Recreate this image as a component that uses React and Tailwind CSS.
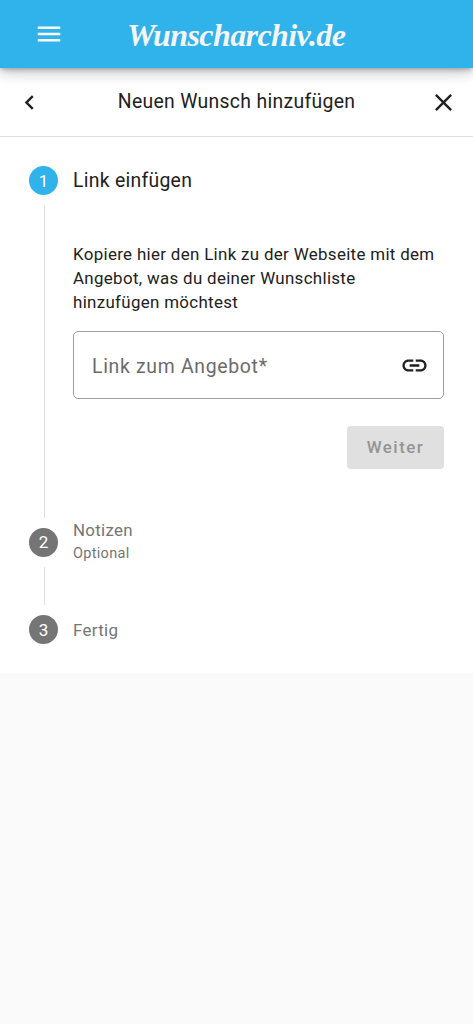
import React from 'react';
import { MdMenu, MdNavigateBefore, MdClose, MdLink } from 'react-icons/md';

const StepBadge = ({ number, active = false }) => (
  <div
    className={`flex size-[29px] shrink-0 items-center justify-center rounded-full pt-px text-[17px] leading-none text-white ${
      active ? 'bg-[#30b2eb]' : 'bg-[#757575]'
    }`}
  >
    {number}
  </div>
);

const TopBar = () => (
  <header className="relative z-10 flex h-[68px] items-center bg-[#30b2eb] pl-[34px] text-white shadow-[0_2px_5px_-1px_rgba(0,0,0,0.3),0_5px_12px_0_rgba(0,0,0,0.15),0_1px_22px_0_rgba(0,0,0,0.1)]">
    <button type="button" aria-label="Menü">
      <MdMenu className="size-[30px]" />
    </button>
    <span className="ml-[63px] whitespace-nowrap pt-0.5 font-['Liberation_Serif',serif] text-[32px] font-bold italic leading-none tracking-[-0.6px] text-[#f5f5f5]">
      Wunscharchiv.de
    </span>
  </header>
);

const TitleBar = () => (
  <div className="flex h-[69px] items-center justify-between border-b border-[#e0e0e0] pl-[15px] pr-[15px]">
    <button type="button" aria-label="Zurück">
      <MdNavigateBefore className="size-[29px]" />
    </button>
    <h1 className="text-[19.4px] leading-6 tracking-[0.31px]">Neuen Wunsch hinzufügen</h1>
    <button type="button" aria-label="Schließen">
      <MdClose className="size-[29px]" />
    </button>
  </div>
);

export default function App() {
  return (
    <div className="min-h-screen bg-[#fafafa] font-[Roboto,sans-serif] text-[#212121]">
      <TopBar />
      <main className="h-[605px] bg-white">
        <TitleBar />
        <div className="pl-[29px] pr-[29px] pt-[29px]">
          {/* Step 1 */}
          <div className="flex items-center gap-[15px]">
            <StepBadge number={1} active />
            <h2 className="text-[19.4px] leading-6 tracking-[0.28px]">Link einfügen</h2>
          </div>
          <div className="mt-[10px] ml-[15px] flex h-[313px] border-l border-[#e0e0e0] pl-[28px]">
            <div className="flex min-w-0 flex-1 flex-col pt-[37px]">
              <p className="text-[16.9px] leading-[24.2px] tracking-[0.33px]">
                Kopiere hier den Link zu der Webseite mit dem
                <br />
                Angebot, was du deiner Wunschliste
                <br />
                hinzufügen möchtest
              </p>
              <div className="mt-[16px] flex h-[68px] items-center justify-between rounded-[5px] border border-[#9e9e9e] pl-[18px] pr-[14px]">
                <span className="pt-[5px] text-[19.4px] leading-6 tracking-[0.7px] text-[#6b6b6b]">
                  Link zum Angebot*
                </span>
                <MdLink className="mt-px size-[29px]" />
              </div>
              <button
                type="button"
                disabled
                className="mt-[27px] h-[43px] w-[97px] self-end rounded-[4px] bg-[#e0e0e0] pt-[2px] text-[16.9px] font-medium tracking-[1.5px] text-[#949494]"
              >
                Weiter
              </button>
            </div>
          </div>

          {/* Step 2 */}
          <div className="flex items-center gap-[15px] text-[#757575]">
            <StepBadge number={2} />
            <div>
              <div className="text-[16.9px] leading-6 tracking-[0.3px]">Notizen</div>
              <div className="text-[14.5px] leading-6 tracking-[0.3px]">Optional</div>
            </div>
          </div>
          <div className="mt-px ml-[15px] h-[38px] border-l border-[#e0e0e0]" />

          {/* Step 3 */}
          <div className="mt-[10px] flex items-center gap-[15px] text-[#757575]">
            <StepBadge number={3} />
            <div className="text-[16.9px] leading-6 tracking-[0.3px]">Fertig</div>
          </div>
        </div>
      </main>
    </div>
  );
}
